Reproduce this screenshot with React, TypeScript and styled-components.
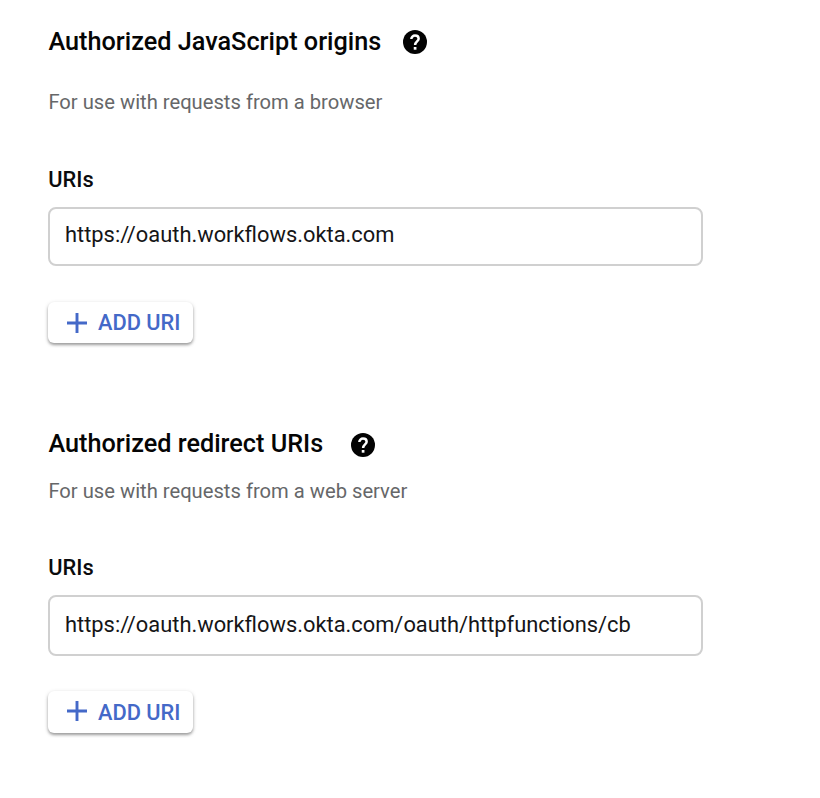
import React from "react";
import styled, { createGlobalStyle } from "styled-components";

const Global = createGlobalStyle`
  * { box-sizing: border-box; }
  body { margin: 0; background: #fff; font-family: Roboto, sans-serif; color: #0b0b0d; }
`;
const Page = styled.main`
  width: 820px;
  height: 798px;
  overflow: hidden;
  padding: 24px 48px 0;
`;
const Section = styled.section<{ $top?: number }>`
  display: flex;
  flex-direction: column;
  align-items: flex-start;
  margin-top: ${(p) => p.$top ?? 0}px;
`;
const Heading = styled.div<{ $gap: number; $iconTop: number }>`
  display: flex;
  align-items: flex-start;
  gap: ${(p) => p.$gap}px;
  height: 36px;

  svg { margin-top: ${(p) => p.$iconTop}px; }
`;
const Title = styled.h2<{ $width: number }>`
  margin: 0;
  padding-left: 0.4px;
  width: ${(p) => p.$width}px;
  font-size: 25.25px;
  line-height: 35px;
  font-weight: 500;
  color: #050505;
  white-space: nowrap;
`;
const Hint = styled.p<{ $top: number }>`
  margin: ${(p) => p.$top}px 0 0;
  padding-left: 0.4px;
  font-size: 20.2px;
  line-height: 28px;
  color: #666769;
`;
const Label = styled.label<{ $top: number }>`
  margin-top: ${(p) => p.$top}px;
  padding-left: 0.3px;
  font-size: 21.8px;
  line-height: 26px;
  font-weight: 500;
`;
const Field = styled.input<{ $height: number; $lift: number }>`
  width: 655px;
  height: ${(p) => p.$height}px;
  margin-top: 14px;
  padding: 0 15px ${(p) => p.$lift}px;
  border: 2px solid #d0d0d0;
  border-radius: 8px;
  font: 400 21.87px Roboto, sans-serif;
  color: #151517;
  background: #fff;
  outline: none;
`;
const AddButton = styled.button<{ $height: number }>`
  display: flex;
  align-items: center;
  gap: 10px;
  width: 145px;
  height: ${(p) => p.$height}px;
  margin-top: ${(p) => (p.$height > 41 ? 35 : 36)}px;
  padding: 0 0 0 18px;
  border: 0;
  border-radius: 6px;
  background: #fff;
  color: #4469c8;
  font: 500 21.8px Roboto, sans-serif;
  white-space: nowrap;
  box-shadow: 0 2px 3px rgba(0, 0, 0, 0.34), 0 1px 5px rgba(0, 0, 0, 0.1);

  svg { margin-bottom: ${(p) => (p.$height > 41 ? 2 : 0)}px; }
`;
const Help = () => (
  <svg width="24" height="24" viewBox="0 0 24 24" aria-label="Help">
    <circle cx="12" cy="12" r="12" fill="#030303" />
    <path
      d="M8.35 9.1A3.65 3.5 0 0 1 12 5.6c2.1 0 3.65 1.3 3.65 3.15 0 2.6-3.55 2.9-3.55 6.3"
      fill="none"
      stroke="#fff"
      strokeWidth="2.5"
    />
    <rect x="10.75" y="17" width="2.7" height="2.7" fill="#fff" />
  </svg>
);
const Plus = () => (
  <svg width="22" height="22" viewBox="0 0 22 22" aria-hidden="true">
    <path d="M11 1v20M1 11h20" stroke="currentColor" strokeWidth="2.9" />
  </svg>
);

export default function App() {
  return (
    <>
      <Global />
      <Page>
        <Section>
          <Heading $gap={22} $iconTop={6}><Title $width={333}>Authorized JavaScript origins</Title><Help /></Heading>
          <Hint $top={28}>For use with requests from a browser</Hint>
          <Label $top={51} htmlFor="origin">URIs</Label>
          <Field id="origin" $height={59} $lift={5} defaultValue="https://oauth.workflows.okta.com" />
          <AddButton $height={41}><Plus />ADD URI</AddButton>
        </Section>
        <Section $top={83}>
          <Heading $gap={28} $iconTop={7}><Title $width={275}>Authorized redirect URIs</Title><Help /></Heading>
          <Hint $top={15}>For use with requests from a web server</Hint>
          <Label $top={50} htmlFor="redirect">URIs</Label>
          <Field id="redirect" $height={61} $lift={2} defaultValue="https://oauth.workflows.okta.com/oauth/httpfunctions/cb" />
          <AddButton $height={42}><Plus />ADD URI</AddButton>
        </Section>
      </Page>
    </>
  );
}
